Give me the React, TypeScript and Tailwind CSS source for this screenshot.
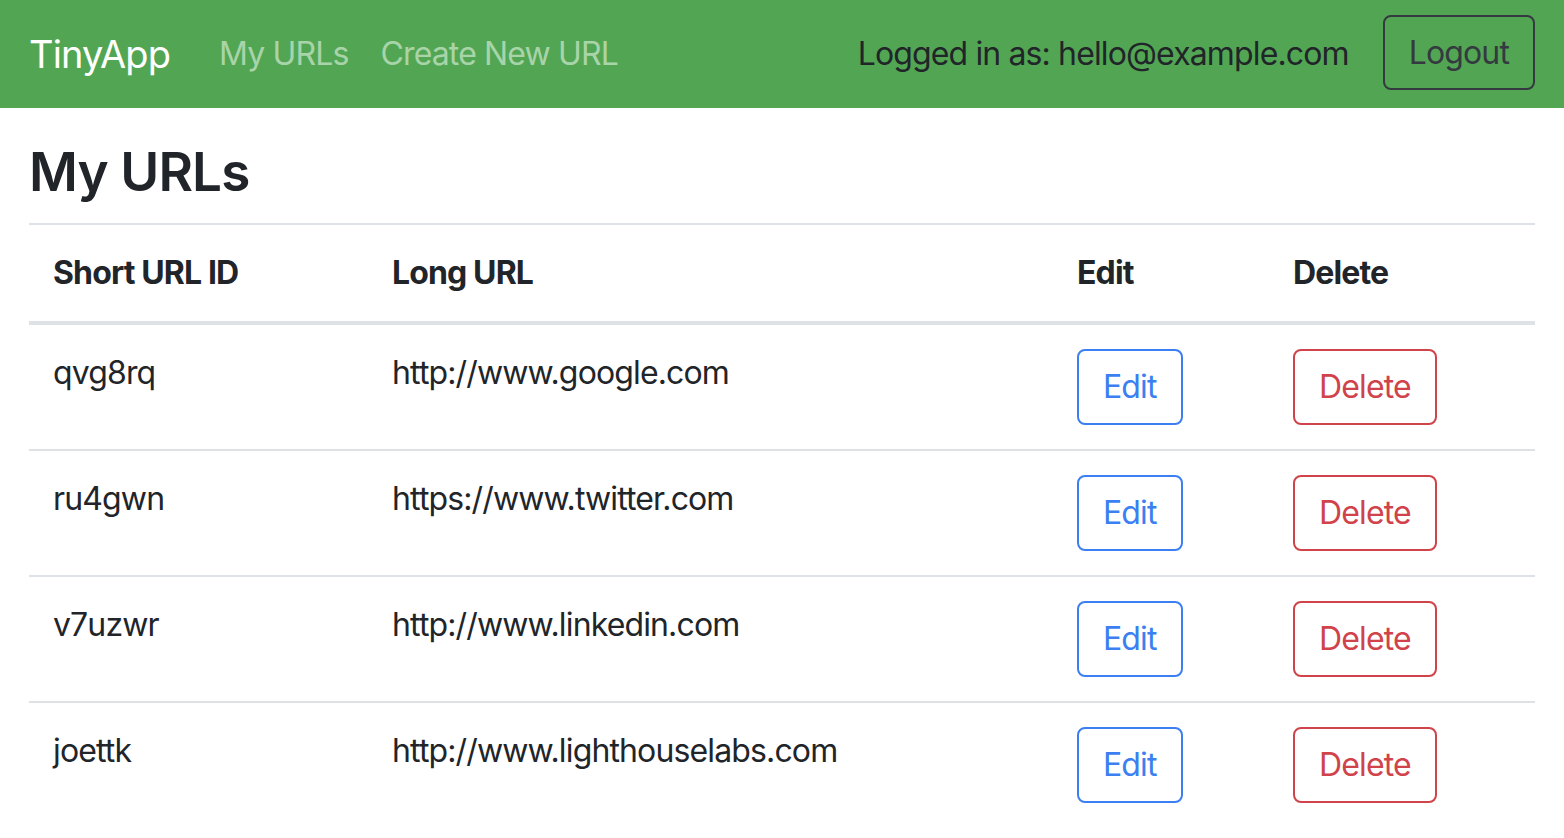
const urls = [
  { id: "qvg8rq", long: "http://www.google.com" },
  { id: "ru4gwn", long: "https://www.twitter.com" },
  { id: "v7uzwr", long: "http://www.linkedin.com" },
  { id: "joettk", long: "http://www.lighthouselabs.com" },
];

export default function App() {
  return (
    <div className="min-h-screen bg-white text-[#212529] font-['Inter','Liberation_Sans',sans-serif] text-[32px] leading-[48px] tracking-[-0.027em]">
      <nav className="h-[108px] bg-[#52a653] flex items-center px-[29px]">
        <span className="text-white text-[38px] leading-[60px] mr-[49px]">TinyApp</span>
        <div className="flex items-center gap-[32px] text-[#a9d4aa]">
          <span>My URLs</span>
          <span>Create New URL</span>
        </div>
        <div className="ml-auto flex items-center gap-[34px]">
          <span>Logged in as: hello@example.com</span>
          <button className="border-2 border-[#343a40] rounded-[8px] px-[24px] h-[75px] mb-[3px] text-[#343a40]">
            Logout
          </button>
        </div>
      </nav>

      <main className="px-[29px]">
        <h2 className="text-[53px] leading-[67px] font-semibold mt-[31px] mb-[17px]">My URLs</h2>
        <table className="w-full border-collapse table-fixed">
          <thead>
            <tr className="border-t-2 border-[#dee2e6] border-b-4 border-b-[#dee2e6]">
              <th className="w-[339px] text-left font-bold px-[24px] py-[24px]">Short URL ID</th>
              <th className="w-[685px] text-left font-bold px-[24px] py-[24px]">Long URL</th>
              <th className="w-[216px] text-left font-bold px-[24px] py-[24px]">Edit</th>
              <th className="text-left font-bold px-[24px] py-[24px]">Delete</th>
            </tr>
          </thead>
          <tbody>
            {urls.map((u) => (
              <tr key={u.id} className="border-b-2 border-[#dee2e6] last:border-b-0 align-top">
                <td className="p-[24px]">{u.id}</td>
                <td className="p-[24px]">{u.long}</td>
                <td className="p-[24px]">
                  <button className="h-[76px] px-[24px] border-2 border-[#3b7ff2] text-[#3b7ff2] rounded-[8px]">
                    Edit
                  </button>
                </td>
                <td className="p-[24px]">
                  <button className="h-[76px] px-[24px] border-2 border-[#d0434a] text-[#d0434a] rounded-[8px]">
                    Delete
                  </button>
                </td>
              </tr>
            ))}
          </tbody>
        </table>
      </main>
    </div>
  );
}
